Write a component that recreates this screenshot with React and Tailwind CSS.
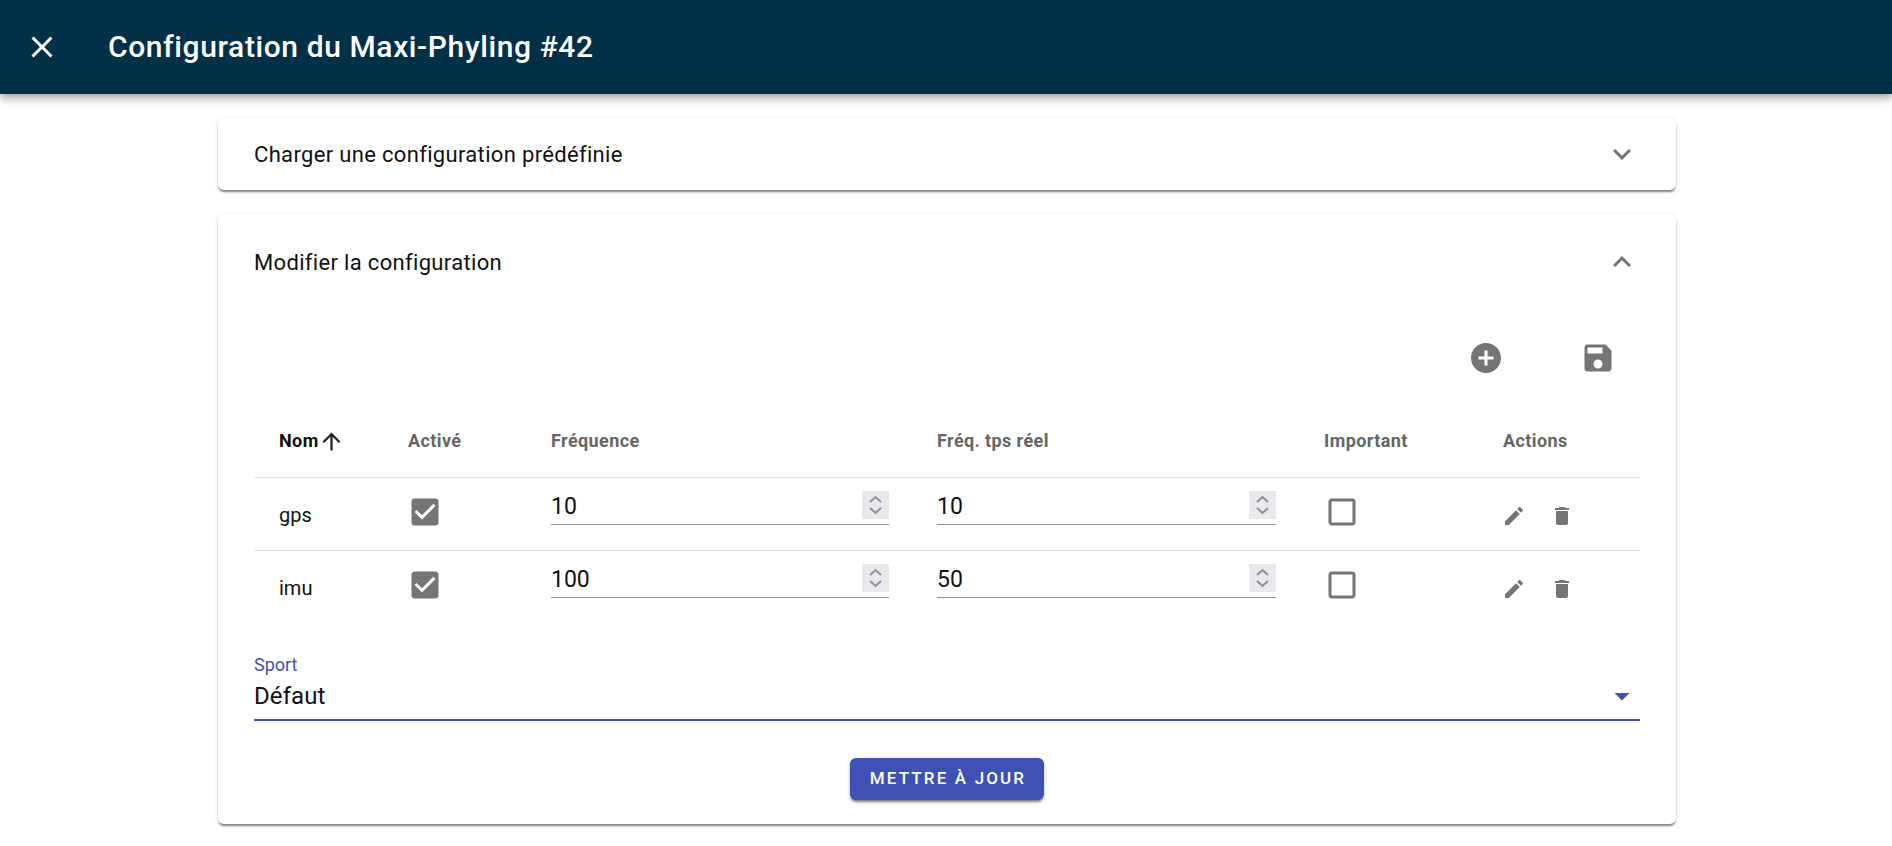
const paths = {
  close: 'M19 6.41 17.59 5 12 10.59 6.41 5 5 6.41 10.59 12 5 17.59 6.41 19 12 13.41 17.59 19 19 17.59 13.41 12z',
  expandMore: 'M16.59 8.59 12 13.17 7.41 8.59 6 10l6 6 6-6z',
  expandLess: 'm12 8-6 6 1.41 1.41L12 10.83l4.59 4.58L18 14z',
  addCircle: 'M12 2C6.48 2 2 6.48 2 12s4.48 10 10 10 10-4.48 10-10S17.52 2 12 2zm5 11h-4v4h-2v-4H7v-2h4V7h2v4h4v2z',
  save: 'M17 3H5c-1.11 0-2 .9-2 2v14c0 1.1.89 2 2 2h14c1.1 0 2-.9 2-2V7l-4-4zm-5 16c-1.66 0-3-1.34-3-3s1.34-3 3-3 3 1.34 3 3-1.34 3-3 3zm3-10H5V5h10v4z',
  edit: 'M3 17.25V21h3.75L17.81 9.94l-3.75-3.75L3 17.25zM20.71 7.04c.39-.39.39-1.02 0-1.41l-2.34-2.34a.9959.9959 0 0 0-1.41 0l-1.83 1.83 3.75 3.75 1.83-1.83z',
  trash: 'M6 19c0 1.1.9 2 2 2h8c1.1 0 2-.9 2-2V7H6v12zM19 4h-3.5l-1-1h-5l-1 1H5v2h14V4z',
  checked: 'M19 3H5c-1.11 0-2 .9-2 2v14c0 1.1.89 2 2 2h14c1.1 0 2-.9 2-2V5c0-1.1-.89-2-2-2zm-9 14l-5-5 1.41-1.41L10 14.17l7.59-7.59L19 8l-9 9z',
  unchecked: 'M19 5v14H5V5h14m0-2H5c-1.1 0-2 .9-2 2v14c0 1.1.9 2 2 2h14c1.1 0 2-.9 2-2V5c0-1.1-.9-2-2-2z',
  arrowUp: 'M4 12l1.41 1.41L11 7.83V20h2V7.83l5.58 5.59L20 12l-8-8-8 8z',
  dropDown: 'M7 10l5 5 5-5z',
}

function Icon({ name, className }) {
  return (
    <svg viewBox="0 0 24 24" fill="currentColor" className={className}>
      <path d={paths[name]} />
    </svg>
  )
}

function Spinner() {
  return (
    <div className="mt-px flex h-[28px] w-[27px] items-center justify-center bg-[#e9e9ed]">
      <svg viewBox="0 0 27 28" fill="none" stroke="#8f8f9d" strokeWidth="2" className="h-[28px] w-[27px]">
        <path d="M8 11l5.500-5 5.500 5" />
        <path d="M8 17l5.500 5 5.500-5" />
      </svg>
    </div>
  )
}

function NumberField({ value }) {
  return (
    <div className="flex h-[35px] items-start justify-between border-b border-[#949494]">
      <span className="text-[23px] leading-[33px] text-[#111]">{value}</span>
      <Spinner />
    </div>
  )
}

const rows = [
  { name: 'gps', frequency: '10', realtime: '10' },
  { name: 'imu', frequency: '100', realtime: '50' },
]

const headers = ['Activé', 'Fréquence', 'Fréq. tps réel', 'Important', 'Actions']

export default function App() {
  return (
    <div className="min-h-[846px] bg-white font-['Roboto',sans-serif] text-[#111]">
      <header className="flex h-[94px] items-center bg-[#023047] text-white shadow-[0_3px_6px_-1px_rgba(0,0,0,0.2),0_6px_8px_0_rgba(0,0,0,0.14),0_2px_15px_0_rgba(0,0,0,0.12)]">
        <Icon name="close" className="ml-[24px] h-[36px] w-[36px]" />
        <h1 className="mb-[2px] ml-[48px] text-[30px] font-medium tracking-[0.6px]">Configuration du Maxi-Phyling #42</h1>
      </header>

      <main className="ml-[218px] flex w-[1458px] flex-col gap-[24px] pt-[24px]">
        <section className="flex h-[72px] items-center justify-between rounded-[6px] bg-white px-[36px] shadow-[0_3px_2px_-1px_rgba(0,0,0,0.35),0_2px_2px_0_rgba(0,0,0,0.14),0_1px_5px_0_rgba(0,0,0,0.12)]">
          <span className="text-[22px] tracking-[0.33px]">Charger une configuration prédéfinie</span>
          <Icon name="expandMore" className="h-[36px] w-[36px] text-[#757575]" />
        </section>

        <section className="rounded-[6px] bg-white px-[36px] pb-[24px] shadow-[0_3px_2px_-1px_rgba(0,0,0,0.35),0_2px_2px_0_rgba(0,0,0,0.14),0_1px_5px_0_rgba(0,0,0,0.12)]">
          <div className="flex h-[96px] items-center justify-between">
            <span className="text-[22px] tracking-[0.33px]">Modifier la configuration</span>
            <Icon name="expandLess" className="h-[36px] w-[36px] text-[#757575]" />
          </div>

          <div className="flex h-[95px] items-start justify-end gap-[76px] pr-[24px] pt-[30px] text-[#757575]">
            <Icon name="addCircle" className="h-[36px] w-[36px]" />
            <Icon name="save" className="h-[36px] w-[36px]" />
          </div>

          <table className="w-full table-fixed border-collapse">
            <colgroup>
              <col className="w-[154px]" />
              <col className="w-[143px]" />
              <col className="w-[386px]" />
              <col className="w-[387px]" />
              <col className="w-[179px]" />
              <col />
            </colgroup>
            <thead>
              <tr className="h-[72px] border-b border-[#e0e0e0] text-left text-[18px] tracking-[0.4px]">
                <th className="pl-[25px] font-bold">
                  <span className="flex items-center">
                    Nom
                    <Icon name="arrowUp" className="-ml-[1px] mt-[2px] h-[27px] w-[27px] text-[#222]" />
                  </span>
                </th>
                {headers.map((label) => (
                  <th key={label} className="font-bold text-[#666]">{label}</th>
                ))}
              </tr>
            </thead>
            <tbody>
              {rows.map((row, index) => (
                <tr key={row.name} className={index === 0 ? 'h-[73px] border-b border-[#e0e0e0]' : 'h-[73px]'}>
                  <td className="pl-[25px] align-top pt-[25px] text-[20px] leading-[24px]">{row.name}</td>
                  <td className="align-top pt-[16px]">
                    <Icon name="checked" className="-ml-[1px] h-[36px] w-[36px] text-[#757575]" />
                  </td>
                  <td className="align-top pt-[12px] pr-[48px]"><NumberField value={row.frequency} /></td>
                  <td className="align-top pt-[12px] pr-[48px]"><NumberField value={row.realtime} /></td>
                  <td className="align-top pt-[16px]">
                    <Icon name="unchecked" className="h-[36px] w-[36px] text-[#757575]" />
                  </td>
                  <td className="align-top pt-[26px]">
                    <div className="-ml-[1px] flex gap-[24px] text-[#757575]">
                      <Icon name="edit" className="h-[24px] w-[24px]" />
                      <Icon name="trash" className="h-[24px] w-[24px]" />
                    </div>
                  </td>
                </tr>
              ))}
            </tbody>
          </table>

          <div className="pt-[32px]">
            <div className="h-[20px] text-[18px] leading-[20px] text-[#3f51b5]">Sport</div>
            <div className="flex h-[46px] items-center justify-between border-b-2 border-[#3f51b5] pb-[2px]">
              <span className="text-[24px] tracking-[0.1px]">Défaut</span>
              <Icon name="dropDown" className="h-[36px] w-[36px] text-[#3f51b5]" />
            </div>
          </div>

          <div className="mt-[37px] flex justify-center">
            <button
              type="button"
              className="h-[42px] w-[194px] rounded-[6px] bg-[#3f51b5] pl-[2px] text-[17px] font-medium uppercase tracking-[2.15px] text-white shadow-[0_3px_2px_-1px_rgba(0,0,0,0.35),0_2px_3px_0_rgba(0,0,0,0.14),0_1px_6px_0_rgba(0,0,0,0.12)]"
            >
              Mettre à jour
            </button>
          </div>
        </section>
      </main>
    </div>
  )
}
